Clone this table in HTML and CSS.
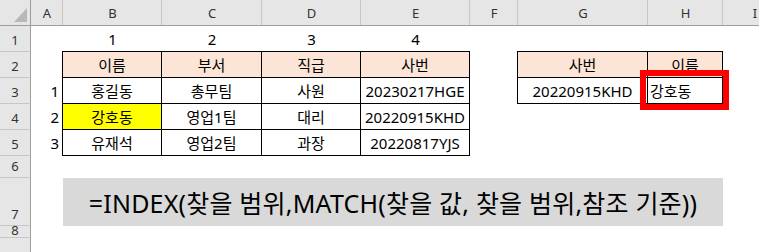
FILE: index.html
```html
<!DOCTYPE html>
<html lang="ko">

<head>
    <meta charset="UTF-8">
    <meta name="viewport" content="width=device-width, initial-scale=1.0">
    <title>INDEX MATCH</title>

    <link rel="stylesheet" href="styles.css">
</head>

<body>

    <div class="sheet">
        <!-- column headers -->
        <div class="corner">
            <svg width="31" height="26" viewBox="0 0 31 26">
                <polygon points="14,22 27,22 27,8" fill="#b8b8b8" />
            </svg>
        </div>
        <div class="col-hd">A</div>
        <div class="col-hd">B</div>
        <div class="col-hd">C</div>
        <div class="col-hd">D</div>
        <div class="col-hd">E</div>
        <div class="col-hd">F</div>
        <div class="col-hd">G</div>
        <div class="col-hd">H</div>
        <div class="col-hd">I</div>

        <!-- row 1 -->
        <div class="row-hd">1</div>
        <div></div>
        <div class="cell">1</div>
        <div class="cell">2</div>
        <div class="cell">3</div>
        <div class="cell">4</div>
        <div></div>
        <div></div>
        <div></div>
        <div></div>

        <!-- row 2 -->
        <div class="row-hd">2</div>
        <div></div>
        <div class="cell box head top left">이름</div>
        <div class="cell box head top">부서</div>
        <div class="cell box head top">직급</div>
        <div class="cell box head top">사번</div>
        <div></div>
        <div class="cell box head top left">사번</div>
        <div class="cell box head top">이름</div>
        <div></div>

        <!-- row 3 -->
        <div class="row-hd">3</div>
        <div class="cell idx">1</div>
        <div class="cell box left">홍길동</div>
        <div class="cell box">총무팀</div>
        <div class="cell box">사원</div>
        <div class="cell box">20230217HGE</div>
        <div></div>
        <div class="cell box left">20220915KHD</div>
        <div class="cell box text-left result">
            강호동
            <span class="mark"></span>
        </div>
        <div></div>

        <!-- row 4 -->
        <div class="row-hd">4</div>
        <div class="cell idx">2</div>
        <div class="cell box left hit">강호동</div>
        <div class="cell box">영업1팀</div>
        <div class="cell box">대리</div>
        <div class="cell box">20220915KHD</div>
        <div></div>
        <div></div>
        <div></div>
        <div></div>

        <!-- row 5 -->
        <div class="row-hd">5</div>
        <div class="cell idx">3</div>
        <div class="cell box left">유재석</div>
        <div class="cell box">영업2팀</div>
        <div class="cell box">과장</div>
        <div class="cell box">20220817YJS</div>
        <div></div>
        <div></div>
        <div></div>
        <div></div>

        <!-- row 6 -->
        <div class="row-hd">6</div>
        <div class="blank"></div>

        <!-- row 7 : merged B7:H7 -->
        <div class="row-hd">7</div>
        <div></div>
        <div class="formula">=INDEX(찾을 범위,MATCH(찾을 값, 찾을 범위,참조 기준))</div>
        <div></div>

        <!-- row 8 (squeezed) -->
        <div class="row-hd short">8</div>
        <div class="blank"></div>

        <!-- row 9 -->
        <div class="row-hd"></div>
        <div class="blank"></div>
    </div>

</body>

</html>
```

FILE: styles.css
```css
body {
    margin: 0;
    padding: 0;
    background-color: #ffffff;
    font-family: 'Noto Sans', 'Noto Sans CJK KR', sans-serif;
    overflow: hidden;
}

.sheet {
    display: grid;
    grid-template-columns: 31px 32px 99px 100px 99px 109px 48px 130px 75px 64px;
    grid-template-rows: 26px 26px 26px 26px 26px 26px 22px 48px 12px 15px;
    width: 759px;
    height: 252px;
    overflow: hidden;
}

.corner {
    background-color: #e6e6e6;
    border-right: 1px solid #9e9e9e;
    border-bottom: 1px solid #9e9e9e;
    box-sizing: border-box;
}

.corner svg {
    display: block;
}

.col-hd {
    background-color: #e6e6e6;
    border-bottom: 1px solid #9e9e9e;
    box-shadow: inset -1px 0 0 #c6c6c6;
    box-sizing: border-box;
    display: flex;
    justify-content: center;
    align-items: center;
    font-size: 13px;
    color: #333333;
}

.row-hd {
    grid-column: 1;
    background-color: #e6e6e6;
    border-right: 1px solid #9e9e9e;
    border-bottom: 1px solid #c6c6c6;
    box-sizing: border-box;
    display: flex;
    justify-content: center;
    align-items: flex-end;
    padding-bottom: 2px;
    font-size: 13px;
    line-height: 17px;
    color: #333333;
    overflow: hidden;
}

.row-hd.short {
    align-items: flex-start;
    padding-bottom: 0;
    line-height: 8px;
}

.blank {
    grid-column: 2 / -1;
}

.cell {
    box-sizing: border-box;
    display: flex;
    justify-content: center;
    align-items: center;
    font-size: 15px;
    color: #000000;
    white-space: nowrap;
    position: relative;
}

.idx {
    justify-content: flex-end;
    padding-right: 4px;
}

.box {
    border-right: 1px solid #000000;
    border-bottom: 1px solid #000000;
}

.box.top {
    box-shadow: 0 -1px 0 #000000;
}

.box.left {
    box-shadow: -1px 0 0 #000000;
}

.box.top.left {
    box-shadow: 0 -1px 0 #000000, -1px 0 0 #000000, -1px -1px 0 #000000;
}

.head {
    background-color: #fce4d6;
}

.hit {
    background-color: #ffff00;
}

.text-left {
    justify-content: flex-start;
    padding-left: 2px;
}

/* red frame over the lookup result */
.mark {
    position: absolute;
    left: -8px;
    top: -8px;
    width: 89px;
    height: 40px;
    box-sizing: border-box;
    border: 6px solid #ff0000;
}

.formula {
    grid-column: 3 / 10;
    background-color: #d9d9d9;
    display: flex;
    justify-content: center;
    align-items: center;
    font-size: 25px;
    letter-spacing: 0.2px;
    color: #000000;
    white-space: nowrap;
}
```
